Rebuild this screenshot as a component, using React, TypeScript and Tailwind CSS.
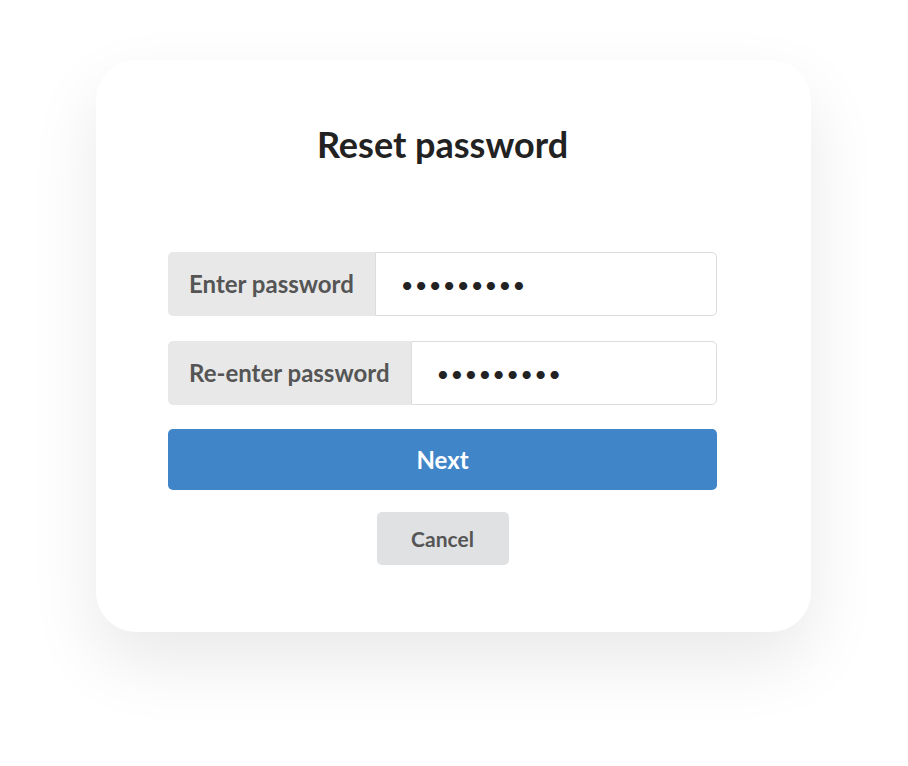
import React from "react";

export default function App() {
  const dots = "•••••••••";
  return (
    <div
      className="w-[908px] h-[766px] bg-white flex pl-[96px] pt-[60px]"
      style={{ fontFamily: "Lato, 'Open Sans', sans-serif" }}
    >
      <div className="w-[715px] h-[572px] bg-white rounded-[40px] shadow-[0_30px_70px_rgba(0,0,0,0.09)] pl-[72px] pr-[94px] flex flex-col">
        <h1 className="mt-[62px] h-[44px] leading-[44px] text-center text-[36px] font-bold text-[#222222]">
          Reset password
        </h1>
        <div className="mt-[86px] flex flex-col">
          <div className="flex h-[64px]">
            <div className="bg-[#e8e8e8] rounded-l-[5px] px-[21px] flex items-center text-[24px] font-bold text-[#555555]">
              Enter password
            </div>
            <div className="flex-1 bg-white border border-[#dcdcdc] rounded-r-[5px] flex items-center pl-[25px] text-[22px] text-[#222222] tracking-[1.2px]">
              {dots}
            </div>
          </div>
          <div className="flex h-[64px] mt-[25px]">
            <div className="bg-[#e8e8e8] rounded-l-[5px] px-[21px] flex items-center text-[24px] font-bold text-[#555555]">
              Re-enter password
            </div>
            <div className="flex-1 bg-white border border-[#dcdcdc] rounded-r-[5px] flex items-center pl-[25px] text-[22px] text-[#222222] tracking-[1.2px]">
              {dots}
            </div>
          </div>
          <button className="mt-[24px] h-[61px] w-full bg-[#4185c9] rounded-[5px] text-white text-[24px] font-bold">
            Next
          </button>
          <div className="flex justify-center mt-[22px]">
            <button className="w-[132px] h-[53px] bg-[#e0e1e3] rounded-[5px] text-[#555555] text-[21px] font-bold">
              Cancel
            </button>
          </div>
        </div>
      </div>
    </div>
  );
}
